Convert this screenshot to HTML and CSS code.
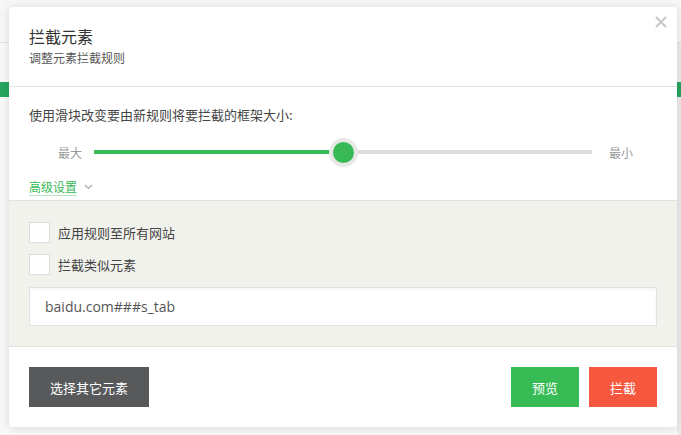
FILE: index.html
```html
<!DOCTYPE html>
<html lang="zh-CN">
<head>
<meta charset="utf-8">
<title>拦截元素</title>
<link rel="stylesheet" href="styles.css">
</head>
<body>
<div class="page">
  <div class="page-top"></div>
  <div class="page-nav"></div>
</div>

<div class="modal">
  <button class="close" aria-label="关闭">
    <svg width="12" height="12" viewBox="0 0 12 12"><path d="M1 1L11 11M11 1L1 11" stroke="#c9c9c9" stroke-width="2.2" fill="none"/></svg>
  </button>
  <div class="modal-header">
    <div class="title">拦截元素</div>
    <div class="subtitle">调整元素拦截规则</div>
  </div>
  <div class="modal-body">
    <div class="hint">使用滑块改变要由新规则将要拦截的框架大小:</div>
    <div class="slider-row">
      <span class="slider-label">最大</span>
      <div class="track">
        <div class="track-fill" style="width:50%"></div>
        <div class="thumb" style="left:50%"></div>
      </div>
      <span class="slider-label">最小</span>
    </div>
    <div class="advanced">
      <span class="adv-link">高级设置</span>
      <svg class="chev" width="9" height="6" viewBox="0 0 9 6"><path d="M1 1L4.5 4.5L8 1" stroke="#aaa" stroke-width="1.2" fill="none"/></svg>
    </div>
  </div>
  <div class="modal-options">
    <label class="check-row"><span class="checkbox"></span><span>应用规则至所有网站</span></label>
    <label class="check-row"><span class="checkbox"></span><span>拦截类似元素</span></label>
    <div class="rule-input">baidu.com###s_tab</div>
  </div>
  <div class="modal-footer">
    <button class="btn btn-dark">选择其它元素</button>
    <div class="footer-right">
      <button class="btn btn-green">预览</button>
      <button class="btn btn-red">拦截</button>
    </div>
  </div>
</div>
</body>
</html>
```

FILE: styles.css
```css
* { box-sizing: border-box; }
html, body { margin: 0; padding: 0; }
body {
  width: 681px;
  height: 435px;
  overflow: hidden;
  background: #f8f8f8;
  font-family: "Noto Sans CJK SC", "Open Sans", sans-serif;
  position: relative;
}
.page { width: 681px; height: 435px; border-right: 4px solid #ececec; }
.page-top { height: 43px; border-bottom: 1px solid #e0e0e0; background: #f7f7f7; margin-right: -4px; }
.page-nav { margin-top: 39px; height: 15px; background: #26a560; margin-right: -4px; }

.modal {
  position: absolute;
  left: 9px;
  top: 7px;
  width: 668px;
  height: 420px;
  background: #fff;
  border-radius: 3px;
  box-shadow: 0 1px 10px rgba(0,0,0,0.13);
  display: flex;
  flex-direction: column;
  overflow: hidden;
}
.close {
  position: absolute;
  right: 10px;
  top: 9px;
  width: 12px;
  height: 12px;
  padding: 0;
  border: 0;
  background: none;
  display: flex;
}
.modal-header {
  padding: 18px 20px 18px;
  border-bottom: 1px solid #e3e3e3;
}
.title { font-size: 16px; line-height: 22px; color: #333; }
.subtitle { font-size: 12px; line-height: 21px; color: #555; }

.modal-body {
  padding: 18px 20px 4px;
  border-bottom: 1px solid #e2e2de;
}
.hint { font-size: 13px; line-height: 20px; color: #444; }
.slider-row {
  margin-top: 12px;
  height: 30px;
  display: flex;
  align-items: center;
  padding-left: 29px;
}
.slider-label { font-size: 12px; color: #999; width: 24px; white-space: nowrap; }
.track {
  flex: 0 0 498px;
  margin: 0 17px 0 12px;
  height: 4px;
  background: #dfdfda;
  position: relative;
}
.track-fill { height: 4px; background: #37b955; }
.thumb {
  position: absolute;
  top: 2px;
  width: 21px;
  height: 21px;
  margin: -10.5px 0 0 -10.5px;
  border-radius: 50%;
  background: #37b955;
  box-shadow: 0 0 0 4px #e8e8e6;
}
.advanced {
  margin-top: 12px;
  display: flex;
  align-items: center;
  gap: 7px;
}
.adv-link {
  font-size: 12px;
  line-height: 16px;
  color: #37b955;
  border-bottom: 1px solid #b7e4c2;
}
.chev { margin-top: -1px; }

.modal-options {
  background: #f2f2ed;
  padding: 21px 20px 20px;
  border-bottom: 1px solid #e1e1dd;
  display: flex;
  flex-direction: column;
}
.check-row {
  display: flex;
  align-items: center;
  gap: 8px;
  font-size: 13px;
  color: #444;
  height: 21px;
  margin-bottom: 11px;
}
.check-row + .check-row { margin-bottom: 12px; }
.checkbox {
  width: 21px;
  height: 21px;
  background: #fff;
  border: 1px solid #dcdcd8;
}
.rule-input {
  height: 39px;
  background: #fff;
  border: 1px solid #e2e2e0;
  box-shadow: inset 0 2px 3px rgba(0,0,0,0.04);
  padding: 0 15px;
  display: flex;
  align-items: center;
  font-family: "Open Sans", "Noto Sans CJK SC", sans-serif;
  font-size: 14px;
  color: #555;
}

.modal-footer {
  flex: 1;
  padding: 20px;
  display: flex;
  justify-content: space-between;
  align-items: flex-start;
}
.footer-right { display: flex; gap: 10px; }
.btn {
  height: 40px;
  border: 0;
  border-radius: 0;
  color: #fff;
  font-family: "Noto Sans CJK SC", sans-serif;
  font-size: 13px;
  padding: 0;
}
.btn-dark { width: 120px; background: #58595b; }
.btn-green { width: 68px; background: #37bb55; }
.btn-red { width: 68px; background: #f5573f; }
```
